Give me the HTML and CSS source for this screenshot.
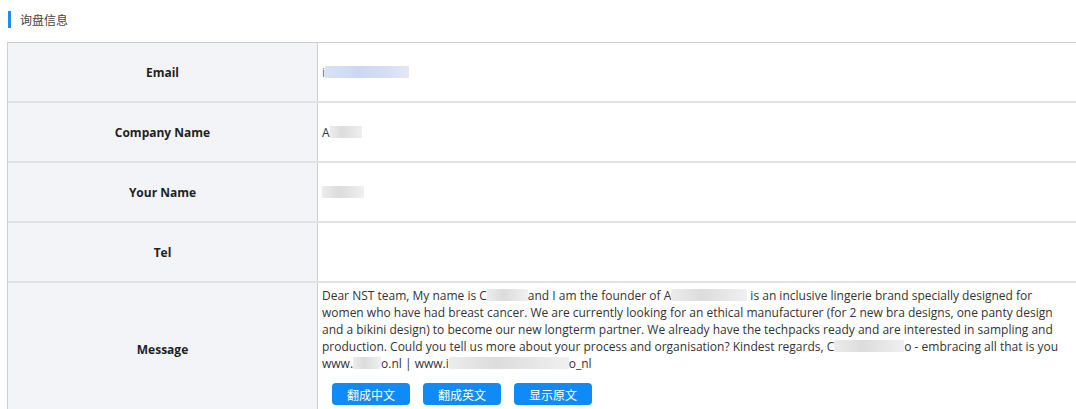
FILE: index.html
```html
<!DOCTYPE html>
<html lang="zh-CN">
<head>
<meta charset="utf-8">
<title>询盘信息</title>
<link rel="stylesheet" href="styles.css">
</head>
<body>
<div class="page">
  <div class="section-title"><span class="bar"></span><span class="title-text">询盘信息</span></div>
  <div class="info-table">
    <div class="row">
      <div class="label">Email</div>
      <div class="value"><span class="email">i<span class="blur blur-blue" style="width:84px"></span></span></div>
    </div>
    <div class="row">
      <div class="label">Company Name</div>
      <div class="value">A<span class="blur" style="width:32px"></span></div>
    </div>
    <div class="row">
      <div class="label">Your Name</div>
      <div class="value"><span class="blur" style="width:42px"></span></div>
    </div>
    <div class="row">
      <div class="label">Tel</div>
      <div class="value"></div>
    </div>
    <div class="row row-message">
      <div class="label">Message</div>
      <div class="value message">
        <p class="msg-text">Dear NST team, My name is C<span class="blur" style="width:41px"></span>and I am the founder of A<span class="blur" style="width:76px"></span> is an inclusive lingerie brand specially designed for<br>women who have had breast cancer. We are currently looking for an ethical manufacturer (for 2 new bra designs, one panty design<br>and a bikini design) to become our new longterm partner. We already have the techpacks ready and are interested in sampling and<br>production. Could you tell us more about your process and organisation? Kindest regards, C<span class="blur" style="width:70px"></span>o - embracing all that is you<br>www.<span class="blur" style="width:28px"></span>o.nl | www.i<span class="blur" style="width:120px"></span>o_nl</p>
        <div class="actions">
          <button class="btn">翻成中文</button>
          <button class="btn">翻成英文</button>
          <button class="btn">显示原文</button>
        </div>
      </div>
    </div>
  </div>
</div>
</body>
</html>
```
FILE: styles.css
```css
* { box-sizing: border-box; }
html, body { margin: 0; padding: 0; background: #fff; }
body {
  font-family: "Open Sans", "Noto Sans CJK SC", sans-serif;
  font-size: 12px;
  color: #333;
  overflow: hidden;
}
.page { padding: 11px 0 0 7px; }
.section-title {
  display: flex;
  align-items: center;
  height: 17px;
  margin-left: 1px;
}
.bar {
  width: 3px;
  height: 17px;
  background: #1d8cf5;
}
.title-text {
  margin-left: 9px;
  font-family: "Noto Sans CJK SC", sans-serif;
  font-size: 12px;
  color: #444;
}
.info-table {
  margin-top: 14px;
  border-top: 1px solid #cfcfcf;
  border-left: 1px solid #cfcfcf;
  width: 1100px;
}
.row {
  display: grid;
  grid-template-columns: 310px 1fr;
  border-bottom: 2px solid #e2e2e2;
}
.label {
  background: #f3f4f8;
  border-right: 1px solid #cfcfcf;
  display: flex;
  align-items: center;
  justify-content: center;
  font-weight: bold;
  height: 58px;
  color: #1f1f1f;
}
.value {
  display: flex;
  align-items: center;
  padding-left: 4px;
  height: 58px;
}
.row-message .label { height: auto; }
.row-message .value {
  height: auto;
  display: block;
  padding: 4px 0 11px 4px;
}
.msg-text {
  margin: 0;
  line-height: 17px;
  color: #333;
  white-space: nowrap;
}
.email { color: #6a5acd; display: inline-flex; align-items: center; }
.blur {
  display: inline-block;
  height: 12px;
  vertical-align: -1px;
  background: linear-gradient(90deg, #ececec, #dcdcdc 40%, #e6e6e6 70%, #f0f0f0);
}
.blur-blue {
  background: linear-gradient(90deg, #d9e3f6, #c9d8f2 40%, #d4def4 70%, #e2e8f6);
}
.actions {
  display: flex;
  gap: 13px;
  margin: 11px 0 0 10px;
}
.btn {
  width: 78px;
  height: 22px;
  border: none;
  border-radius: 4px;
  background: #0f8bf7;
  color: #fff;
  font-family: "Noto Sans CJK SC", sans-serif;
  font-size: 12px;
  padding: 0;
  cursor: pointer;
}
```
